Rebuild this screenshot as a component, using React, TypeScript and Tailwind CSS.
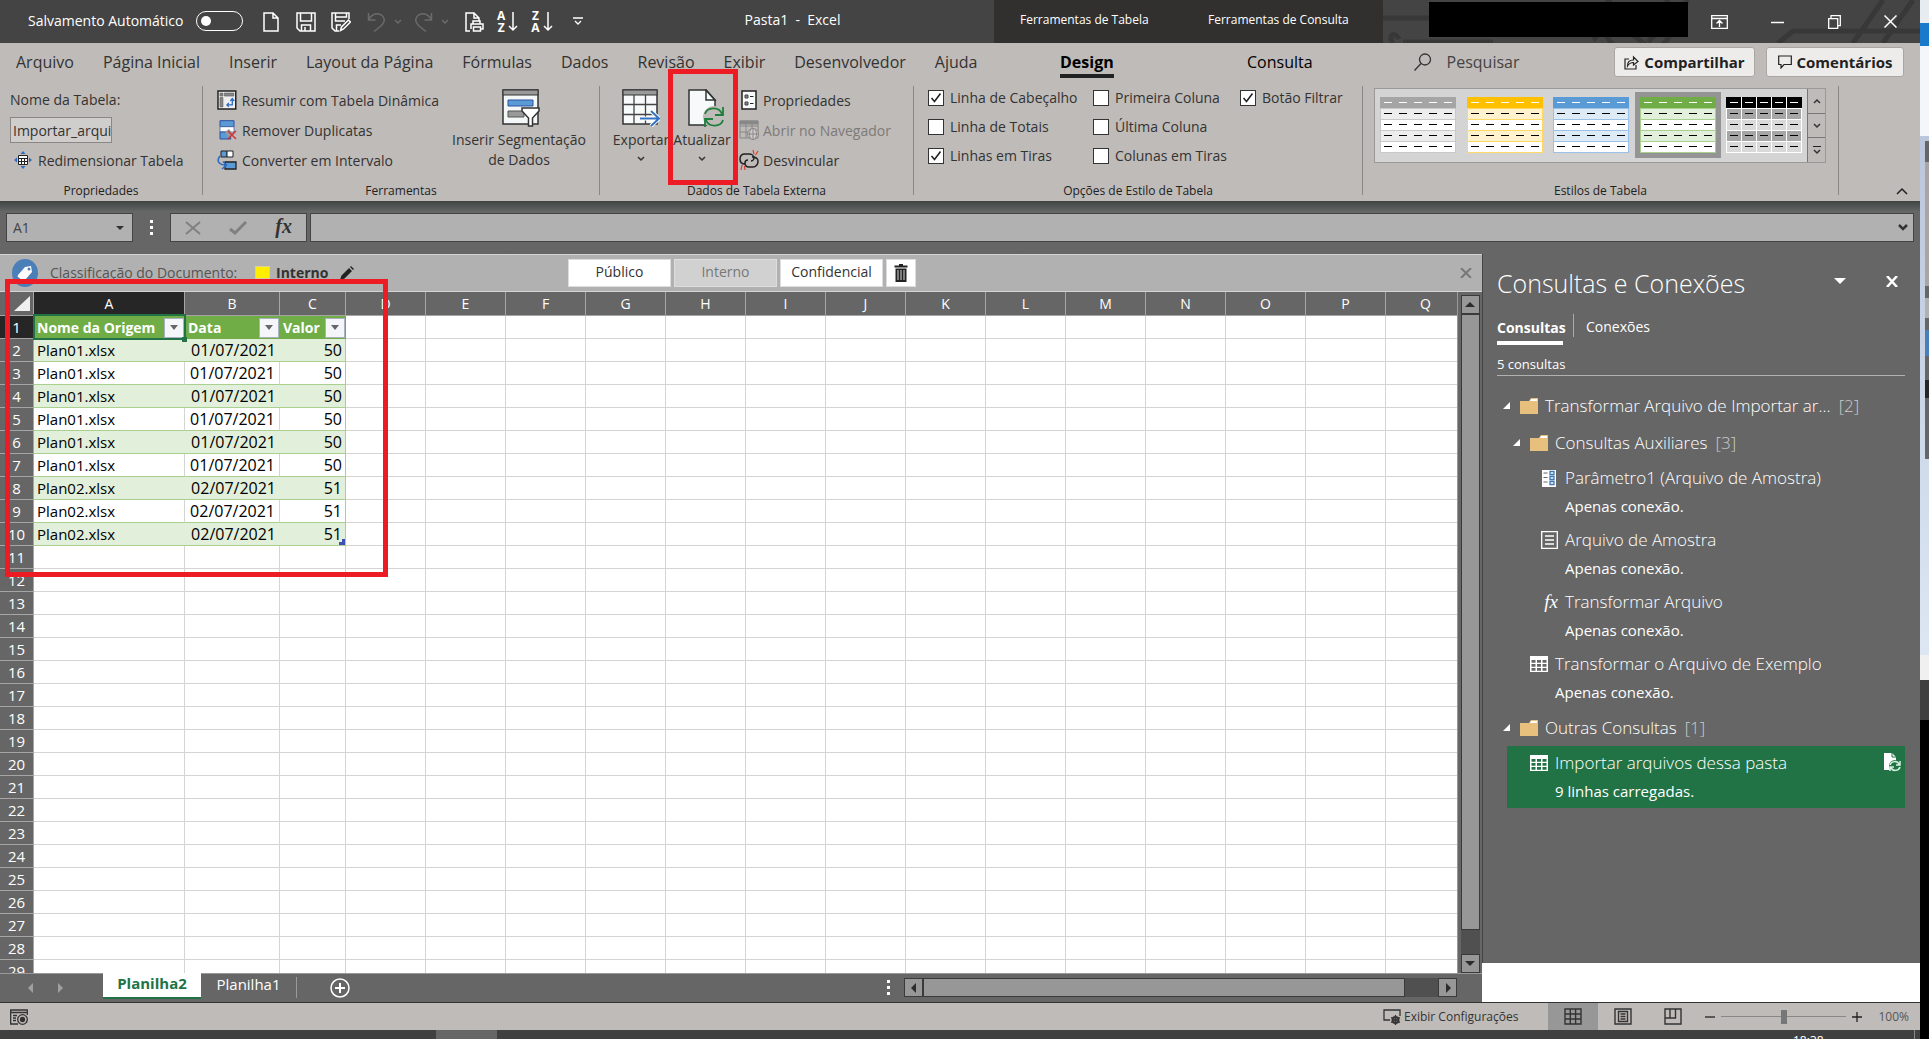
import React, { useState } from 'react';

const sans = "font-['Open_Sans','Noto_Sans',sans-serif]";

const tabs = [
  'Arquivo',
  'Página Inicial',
  'Inserir',
  'Layout da Página',
  'Fórmulas',
  'Dados',
  'Revisão',
  'Exibir',
  'Desenvolvedor',
  'Ajuda',
];

const tableRows = [
  ['Plan01.xlsx', '01/07/2021', '50'],
  ['Plan01.xlsx', '01/07/2021', '50'],
  ['Plan01.xlsx', '01/07/2021', '50'],
  ['Plan01.xlsx', '01/07/2021', '50'],
  ['Plan01.xlsx', '01/07/2021', '50'],
  ['Plan01.xlsx', '01/07/2021', '50'],
  ['Plan02.xlsx', '02/07/2021', '51'],
  ['Plan02.xlsx', '02/07/2021', '51'],
  ['Plan02.xlsx', '02/07/2021', '51'],
];

const letters = 'ABCDEFGHIJKLMNOPQ'.split('');
const emptyLetters = letters.slice(3);

const galleryStyles = [
  { name: 'Cinza', head: '#a5a5a5', band: '#ededed', plain: '#ffffff', line: '#c9c9c9' },
  { name: 'Amarelo', head: '#ffc000', band: '#fff2cc', plain: '#ffffff', line: '#ffd966' },
  { name: 'Azul', head: '#5b9bd5', band: '#ddebf7', plain: '#ffffff', line: '#9bc2e6' },
  { name: 'Verde', head: '#70ad47', band: '#e2efda', plain: '#ffffff', line: '#a9d08e' },
  { name: 'Preto', head: '#000000', band: '#a6a6a6', plain: '#d9d9d9', line: '#ffffff' },
];

const Chevron = ({ className = '', up = false }: { className?: string; up?: boolean }) => (
  <svg viewBox="0 0 8 6" className={`h-[6px] w-2 shrink-0 ${className}`} fill="none" stroke="currentColor" strokeWidth="1.5">
    <path d={up ? 'M1 5l3-3 3 3' : 'M1 1l3 3 3-3'} />
  </svg>
);

const FolderIcon = () => (
  <svg viewBox="0 0 18 16" className="h-4 w-[18px] shrink-0">
    <path d="M0 3h9l2-3h7v16H0z" fill="#e8c07d" />
    <path d="M10 3l1-2h6v2z" fill="#fff" />
  </svg>
);

const GridIcon = ({ gap = '#666' }: { gap?: string }) => (
  <svg viewBox="0 0 18 16" className="h-4 w-[18px] shrink-0">
    <path d="M0 0h18v16H0z" fill="#fff" />
    <path
      d="M1.5 4h4v2.7h-4zM7 4h4v2.7H7zM12.500 4h4v2.7h-4zM1.500 8h4v2.7h-4zM7 8h4v2.7H7zM12.500 8h4v2.7h-4zM1.500 12h4v2.7h-4zM7 12h4v2.7H7zM12.500 12h4v2.7h-4z"
      fill={gap}
    />
  </svg>
);

const ParamIcon = () => (
  <svg viewBox="0 0 14 17" className="mr-0.5 h-[17px] w-[14px] shrink-0">
    <path d="M0 0h14v17H0z" fill="#fff" />
    <path d="M1.5 3h4M1.5 7.5h4M1.5 12h4" stroke="#666" />
    <path d="M8 1.5h4v3H8zM8 6.5h4v3H8zM8 11.5h4v3H8z" fill="none" stroke="#3f78b5" strokeWidth="1.3" />
  </svg>
);

const TextFileIcon = () => (
  <svg viewBox="0 0 17 18" className="h-[18px] w-[17px] shrink-0" fill="none" stroke="#fff" strokeWidth="1.3">
    <path d="M.7.7h15.600v16.600H.7zM4 5h9M4 9h9M4 13h9" />
  </svg>
);

const SortIcon = ({ first, second }: { first: string; second: string }) => (
  <>
    <span className="flex flex-col">
      <span>{first}</span>
      <span>{second}</span>
    </span>
    <svg viewBox="0 0 10 20" className="ml-[3px] h-5 w-[10px]" fill="none" stroke="currentColor" strokeWidth="1.5">
      <path d="M5 0v18M1 14l4 4 4-4" />
    </svg>
  </>
);

const QuickAccess = () => (
  <div className="flex items-center text-white">
    <button aria-label="Novo" className="ml-5">
      <svg viewBox="0 0 16 20" className="h-5 w-4" fill="none" stroke="currentColor" strokeWidth="1.5">
        <path d="M1 1h9l5 5v13H1zM10 1v5h5" />
      </svg>
    </button>
    <button aria-label="Salvar" className="ml-[17px]">
      <svg viewBox="0 0 20 20" className="h-5 w-5" fill="none" stroke="currentColor" strokeWidth="1.5">
        <path d="M1 1h18v18H4l-3-3zM4.500 1v8h11V1M5.500 19v-6h9v6M9 15v4" />
      </svg>
    </button>
    <button aria-label="Salvar como" className="ml-[15px]">
      <svg viewBox="0 0 20 20" className="h-5 w-5" fill="none" stroke="currentColor" strokeWidth="1.5">
        <path d="M18 7V1H1v15l3 3h4M4.500 1v8H14M5.500 19v-6H10M4.500 5h11V1" />
        <path d="M9.500 18.500l1-3.500 7-7 2 2-7 7z" />
      </svg>
    </button>
    <button aria-label="Desfazer" className="ml-4 flex items-center text-[#6b6b6b]">
      <svg viewBox="0 0 19 20" className="h-5 w-[19px]" fill="none" stroke="currentColor" strokeWidth="1.5">
        <path d="M1.500 1v7h7M1.500 8C5 1.500 11 0 15 3.500s2 8-1 10.500L7 19.500" />
      </svg>
      <Chevron className="ml-2" />
    </button>
    <button aria-label="Refazer" className="ml-3 flex items-center text-[#6b6b6b]">
      <svg viewBox="0 0 19 20" className="h-5 w-[19px]" fill="none" stroke="currentColor" strokeWidth="1.5">
        <path d="M17.500 1v7h-7M17.500 8C14 1.500 8 0 4 3.500s-2 8 1 10.500l7 5.500" />
      </svg>
      <Chevron className="ml-2" />
    </button>
    <button aria-label="Visualizar impressão" className="ml-4">
      <svg viewBox="0 0 19 20" className="h-5 w-[19px]" fill="none" stroke="currentColor" strokeWidth="1.5">
        <path d="M5 19H1V1h8l5 5v3M9 1v5h5M8 12V9h7v3M6 17v-5h12v5h-2M8.500 15h7v4h-7z" />
      </svg>
    </button>
    <button aria-label="Classificar de A a Z" className="ml-[13px] flex items-center text-[12px] leading-3 font-bold">
      <SortIcon first="A" second="Z" />
    </button>
    <button aria-label="Classificar de Z a A" className="ml-[13px] flex items-center text-[12px] leading-3 font-bold">
      <SortIcon first="Z" second="A" />
    </button>
    <button aria-label="Personalizar" className="ml-5">
      <svg viewBox="0 0 10 9" className="h-[9px] w-[10px]" fill="none" stroke="currentColor" strokeWidth="1.3">
        <path d="M0 1h10M2 4l3 3 3-3" />
      </svg>
    </button>
  </div>
);

const TitleBar = () => (
  <header className="flex h-[43px] shrink-0 bg-[#444444] text-white">
    <div className="flex min-w-0 flex-1 items-center pl-7">
      <label htmlFor="autosave" className="w-[160px] pb-0.5 text-[14px] whitespace-nowrap">
        Salvamento Automático
      </label>
      <input
        id="autosave"
        type="checkbox"
        role="switch"
        className="mb-0.5 ml-2 h-5 w-[47px] shrink-0 appearance-none rounded-full border-[1.5px] border-white before:mt-1 before:ml-1 before:block before:h-[10px] before:w-[10px] before:rounded-full before:bg-white"
      />
      <QuickAccess />
      <h1 className="ml-[162px] pb-1 text-[14px] whitespace-pre">Pasta1  -  Excel</h1>
    </div>
    <div className="flex w-[389px] shrink-0 items-center bg-[#32302e] pb-1 text-[12px]">
      <span className="w-[182px] pl-[26px]">Ferramentas de Tabela</span>
      <span className="pl-8">Ferramentas de Consulta</span>
    </div>
    <div className="relative flex w-[537px] shrink-0 items-center overflow-hidden">
      <svg viewBox="0 0 537 43" className="absolute inset-0 h-full w-full" fill="none" stroke="#383838" strokeWidth="5">
        <path d="M0 18h50M10 43c-6-8 2-12 6-4M20 42h90M210 40l30-32M230 20l40 30M305 0l-40 42M395 43l15-12h130M470 43l30-43M500 43l30-43" />
        <circle cx="255" cy="20" r="35" />
      </svg>
      <div className="relative mb-1 ml-[46px] h-[35px] w-[259px] bg-black" />
      <div className="relative ml-[23px] flex flex-1 items-center justify-between pr-[23px]">
        <button aria-label="Opções da faixa de opções">
          <svg viewBox="0 0 17 14" className="h-[14px] w-[17px]" fill="none" stroke="#fff" strokeWidth="1.3">
            <path d="M.7.7h15.600v12.600H.7zM.7 3.500h15.600M8.500 12V6M5.500 8.500l3-3 3 3" />
          </svg>
        </button>
        <button aria-label="Minimizar">
          <svg viewBox="0 0 13 14" className="h-[14px] w-[13px]">
            <path d="M0 7.5h13" stroke="#fff" strokeWidth="1.5" />
          </svg>
        </button>
        <button aria-label="Restaurar">
          <svg viewBox="0 0 13 14" className="h-[14px] w-[13px]" fill="none" stroke="#fff" strokeWidth="1.3">
            <path d="M.7 3.700h9v9.600h-9zM3 3.500V.7h9.300v10H10" />
          </svg>
        </button>
        <button aria-label="Fechar">
          <svg viewBox="0 0 13 13" className="h-[13px] w-[13px]" stroke="#fff" strokeWidth="1.5">
            <path d="M.5.5l12 12M12.500.5l-12 12" />
          </svg>
        </button>
      </div>
    </div>
  </header>
);

const TabBar = () => (
  <nav className="flex h-[42px] items-center pb-1 text-[16px] text-[#333]">
    <div className="flex w-[1060px] items-center gap-[29px] pl-4">
      {tabs.map((t) => (
        <button key={t} className="whitespace-nowrap">
          {t}
        </button>
      ))}
    </div>
    <div className="w-[187px]">
      <button className="relative font-bold text-black">
        Design
        <span className="absolute -bottom-1 left-0 h-1 w-full bg-[#222]" />
      </button>
    </div>
    <button className="text-black">Consulta</button>
    <label className="ml-[101px] flex w-[180px] items-center">
      <svg viewBox="0 0 18 18" className="h-[18px] w-[18px] shrink-0" fill="none" stroke="#333" strokeWidth="1.3">
        <circle cx="11" cy="6.5" r="5.5" />
        <path d="M7 10.500L.5 17.500" />
      </svg>
      <input
        aria-label="Pesquisar"
        placeholder="Pesquisar"
        className="ml-[15px] w-full bg-transparent outline-none placeholder:text-[#444]"
      />
    </label>
    <div className="ml-auto flex gap-[11px] pr-4 text-[15px] font-bold text-[#222]">
      <button className="flex h-[30px] w-[141px] items-center justify-center gap-[5px] rounded-[3px] border border-[#a9a6a3] bg-[#eeecea]">
        <svg viewBox="0 0 15 15" className="h-[15px] w-[15px]" fill="none" stroke="#222" strokeWidth="1.2">
          <path d="M5 4H1v10h11v-4M3.500 11c0-4 2-6 6-6V2l4.500 4.500L9.500 10V7.500c-3 0-4.500 1-6 3.500z" />
        </svg>
        Compartilhar
      </button>
      <button className="flex h-[30px] w-[138px] items-center justify-center gap-[5px] rounded-[3px] border border-[#a9a6a3] bg-[#eeecea]">
        <svg viewBox="0 0 14 14" className="h-[14px] w-[14px]" fill="none" stroke="#222" strokeWidth="1.2">
          <path d="M.7 1h12.600v8.500H6L3 13V9.500H.7z" />
        </svg>
        Comentários
      </button>
    </div>
  </nav>
);

const RibbonCheck = ({ label, initial = false }: { label: string; initial?: boolean }) => {
  const [checked, setChecked] = useState(initial);
  return (
    <label className="flex h-[29px] items-start gap-1.5 leading-4 whitespace-nowrap">
      <span className="relative flex h-4 w-4 shrink-0">
        <input
          type="checkbox"
          checked={checked}
          onChange={(e) => setChecked(e.target.checked)}
          className="h-4 w-4 appearance-none border border-[#333] bg-white"
        />
        {checked && (
          <svg viewBox="0 0 16 16" className="pointer-events-none absolute inset-0" fill="none" stroke="#222" strokeWidth="1.6">
            <path d="M3.500 8l3 3.500 6-8" />
          </svg>
        )}
      </span>
      {label}
    </label>
  );
};

const RibbonGroup = ({ title, className, children }: { title: string; className: string; children: React.ReactNode }) => (
  <section className={`flex h-[109px] shrink-0 flex-col justify-between border-r border-[#8a8785] ${className}`}>
    {children}
    <h2 className="-mb-0.5 text-center text-[12px] leading-3 text-[#222]">{title}</h2>
  </section>
);

const StyleThumb = ({ head, band, plain, line }: { head: string; band: string; plain: string; line: string }) => (
  <svg viewBox="0 0 76 56" className="h-[56px] w-[76px]">
    {[head, band, plain, band, plain].map((fill, r) => (
      <g key={r}>
        <rect x="0.5" y={r * 11 + 0.5} width="75" height="11" fill={fill} stroke={r === 0 ? head : line} />
        {[0, 1, 2, 3, 4].map((c) => (
          <path key={c} d={`M${4 + c * 15} ${r * 11 + 5.5}h8`} stroke={r === 0 ? '#fff' : '#000'} />
        ))}
      </g>
    ))}
    {head === '#000000' && <path d="M15.500 0v56M30.500 0v56M45.500 0v56M60.500 0v56" stroke="#fff" />}
  </svg>
);

const Ribbon = () => (
  <div className="h-[158px] shrink-0 bg-[#bfbbb8] text-[#333]">
    <TabBar />
    <div className="flex pt-px text-[14px]">
      <RibbonGroup title="Propriedades" className="w-[203px]">
        <div className="flex flex-col pl-[10px]">
          <label htmlFor="table-name" className="h-[31px] leading-7">
            Nome da Tabela:
          </label>
          <input
            id="table-name"
            defaultValue="Importar_arqui"
            className="h-[26px] w-[102px] border border-[#8a8785] bg-[#d0cecc] pl-0.5 outline-none"
          />
          <button className="flex h-[34px] items-center gap-1.5 pl-1 whitespace-nowrap">
            <svg viewBox="0 0 18 18" className="h-[18px] w-[18px]">
              <path d="M9 0l2.500 3h-5zM9 18l2.500-3h-5zM0 9l3-2.500v5zM18 9l-3-2.500v5z" fill="#2b6cc4" />
              <path d="M4.500 4.500h9v9h-9zM4.500 7.500h9M4.500 10.500h9M7.500 7v7M10.500 7v7" fill="#fff" stroke="#222" />
            </svg>
            Redimensionar Tabela
          </button>
        </div>
      </RibbonGroup>

      <RibbonGroup title="Ferramentas" className="w-[397px]">
        <div className="-mt-px flex pl-[14px]">
          <div className="flex w-[222px] flex-col">
            <button className="flex h-[30px] items-center gap-[5px] whitespace-nowrap">
              <svg viewBox="0 0 20 20" className="h-5 w-5" fill="none">
                <path d="M1 1h18v18H1z" fill="#eee" stroke="#222" strokeWidth="1.5" />
                <path d="M3 3h3v3H3zM7.500 3H17v3H7.500zM3 7.500h3V17H3z" fill="#888" stroke="#555" strokeWidth=".6" />
                <path d="M10 15h5.500V9M13.500 11l2-2.500 2 2.500M12 13l-2 2 2 2" stroke="#2b6cc4" strokeWidth="1.3" />
              </svg>
              Resumir com Tabela Dinâmica
            </button>
            <button className="flex h-[30px] items-center gap-[5px] whitespace-nowrap">
              <svg viewBox="0 0 20 20" className="h-5 w-5" fill="none">
                <path d="M3 .7h14v6H3z" fill="#5b9bd5" stroke="#2a50a0" />
                <path d="M3 6.700h14V12H3z" fill="#fff" stroke="#2a50a0" strokeWidth=".7" />
                <path d="M3 12h8l3 7H3z" fill="#5b9bd5" stroke="#2a50a0" />
                <path d="M8 12l4-3 4 5-4 4z" fill="#999" />
                <path d="M11 11l8 8M19 11l-8 8" stroke="#d13438" strokeWidth="1.5" />
              </svg>
              Remover Duplicatas
            </button>
            <button className="flex h-[30px] items-center gap-[5px] whitespace-nowrap">
              <svg viewBox="0 0 20 20" className="h-5 w-5" fill="none">
                <path d="M4 1h6v6H4z" fill="#5b9bd5" stroke="#222" />
                <path d="M10 1h6v6h-6z" fill="#fff" stroke="#222" />
                <path d="M8 12h11v7H8z" fill="#5b9bd5" stroke="#222" strokeWidth="1.3" />
                <path d="M3 6C-1 11 2 15 9 15M6 11.500L9.500 15 5 19" stroke="#2b6cc4" strokeWidth="1.6" />
              </svg>
              Converter em Intervalo
            </button>
          </div>
          <button className="flex flex-1 flex-col items-center pt-1 leading-5">
            <svg viewBox="0 0 38 38" className="mb-[3px] ml-1 h-[38px] w-[38px]">
              <path d="M1 1h35v34H1z" fill="#f4f7f7" stroke="#333" strokeWidth="1.5" />
              <path d="M1 1h35v5H1z" fill="#999" stroke="#333" />
              <path d="M6 11h25v6H6z" fill="#5b9bd5" stroke="#2a50a0" />
              <path d="M6 22h16v6H6z" fill="#999" stroke="#555" />
              <path d="M20 19h17v3l-6.500 7v8h-4v-8L20 22z" fill="#fff" stroke="#333" strokeWidth="1.5" />
            </svg>
            Inserir Segmentação
            <br />
            de Dados
          </button>
        </div>
      </RibbonGroup>

      <RibbonGroup title="Dados de Tabela Externa" className="w-[314px]">
        <div className="-mt-px flex pl-[10px]">
          <button className="flex w-[62px] flex-col items-center pt-1 leading-5">
            <svg viewBox="0 0 38 38" className="mb-[3px] h-[38px] w-[38px]" fill="none">
              <path d="M1 1h34v34H1z" fill="#f7fafa" stroke="#333" strokeWidth="1.5" />
              <path d="M1 1h34v5H1z" fill="#999" stroke="#333" />
              <path d="M1 15.500h34M1 25.500h34M12 6v29M23.500 6v29" stroke="#444" strokeWidth="1.3" />
              <path d="M18 29.500h18M29 22l8 7.500-8 7.500" stroke="#fff" strokeWidth="4" />
              <path d="M18 29.500h18M29 22l8 7.500-8 7.500" stroke="#3373c4" strokeWidth="2" />
            </svg>
            Exportar
            <Chevron className="mt-1.5" />
          </button>
          <button className="relative flex w-[60px] flex-col items-center pt-1 leading-5">
            <svg viewBox="0 0 38 38" className="mb-[3px] ml-2 h-[38px] w-[38px]" fill="none">
              <path d="M2 1h17l9 10v25H2z" fill="#f7fafa" stroke="#333" strokeWidth="1.5" />
              <path d="M19 1v10h9z" stroke="#333" strokeWidth="1.5" />
              <circle cx="27" cy="28" r="11" fill="#bfbbb8" />
              <path d="M18 25c2-7 14-8 17 0M36 18v8h-8M36 31c-2 7-14 8-17 0M18 38v-8h8" stroke="#1f7f3c" strokeWidth="1.8" />
            </svg>
            Atualizar
            <Chevron className="mt-1.5" />
            <span className="pointer-events-none absolute -top-4 -left-1 h-[116px] w-[70px] border-[5px] border-[#ed1c24]" />
          </button>
          <div className="ml-[7px] flex flex-col">
            <button className="flex h-[30px] items-center gap-1 whitespace-nowrap">
              <svg viewBox="0 0 20 20" className="h-5 w-5" fill="none">
                <path d="M3 1h14v18H3z" fill="#f7fafa" stroke="#222" strokeWidth="1.5" />
                <path d="M6 5h3v3H6zM6 12h3v3H6z" fill="#888" stroke="#444" />
                <path d="M11 6.500h3.500M11 13.500h3.500" stroke="#222" />
              </svg>
              Propriedades
            </button>
            <button disabled className="flex h-[30px] items-center gap-1 whitespace-nowrap text-[#7d7a78]">
              <svg viewBox="0 0 20 20" className="h-5 w-5" fill="none" stroke="#888">
                <path d="M1 1h18v17H1zM1 6h18M1 12h18M7 4v14M13 4v14" />
                <path d="M1 1h18v3H1z" fill="#888" />
                <circle cx="14" cy="14" r="5.5" fill="#cfcccb" />
                <path d="M8.500 14h11M14 8.500v11M12 9c-2 3-2 7 0 10M16 9c2 3 2 7 0 10" />
              </svg>
              Abrir no Navegador
            </button>
            <button className="flex h-[30px] items-center gap-1 whitespace-nowrap">
              <svg viewBox="0 0 20 20" className="h-5 w-5" fill="none" stroke="#222" strokeWidth="1.5">
                <path d="M6 14c-3 0-5-2-5-5s2-5 5-5h4c3 0 5 2 5 4s-2 3-3 3M13 7c4 0 6 2 6 4.500S17 17 14 17h-4c-3 0-4-2-4-4s1-3 3-3" />
                <path d="M14 0l1 4M19 1l-2.500 4M2 20l1-5M6 20l-.5-4" stroke="#e03a2a" strokeWidth="1.2" />
              </svg>
              Desvincular
            </button>
          </div>
        </div>
      </RibbonGroup>

      <RibbonGroup title="Opções de Estilo de Tabela" className="w-[449px]">
        <div className="grid grid-cols-[165px_147px_auto] pt-1 pl-[14px]">
          <RibbonCheck label="Linha de Cabeçalho" initial />
          <RibbonCheck label="Primeira Coluna" />
          <RibbonCheck label="Botão Filtrar" initial />
          <RibbonCheck label="Linha de Totais" />
          <RibbonCheck label="Última Coluna" />
          <span />
          <RibbonCheck label="Linhas em Tiras" initial />
          <RibbonCheck label="Colunas em Tiras" />
        </div>
      </RibbonGroup>

      <RibbonGroup title="Estilos de Tabela" className="w-[476px]">
        <div className="mt-0.5 ml-[11px] flex h-[75px] w-[452px] border border-[#999] bg-[#d4d4d4]">
          <div className="flex flex-1 items-start justify-between pt-[3px]">
            {galleryStyles.map((s) => (
              <button
                key={s.name}
                aria-label={s.name}
                className={`flex h-[66px] w-[86px] items-center justify-center border-[5px] ${s.name === 'Verde' ? 'border-[#949494]' : 'border-transparent'}`}
              >
                <StyleThumb {...s} />
              </button>
            ))}
          </div>
          <div className="flex w-[18px] flex-col divide-y divide-[#777] border-l border-[#777] bg-[#bfbbb8]">
            <button aria-label="Acima" className="flex flex-1 items-center justify-center">
              <Chevron up />
            </button>
            <button aria-label="Abaixo" className="flex flex-1 items-center justify-center">
              <Chevron />
            </button>
            <button aria-label="Mais" className="flex flex-1 flex-col items-center justify-center">
              <span className="mb-0.5 h-px w-2 bg-[#222]" />
              <Chevron />
            </button>
          </div>
        </div>
      </RibbonGroup>
      <button aria-label="Recolher faixa de opções" className="mt-auto mr-3 ml-auto">
        <svg viewBox="0 0 12 8" className="h-2 w-3" fill="none" stroke="#222" strokeWidth="1.5">
          <path d="M1 7l5-5 5 5" />
        </svg>
      </button>
    </div>
  </div>
);

const Dots = () => (
  <span className="flex w-[3px] flex-col gap-[3px]">
    <span className="h-[3px] bg-white" />
    <span className="h-[3px] bg-white" />
    <span className="h-[3px] bg-white" />
  </span>
);

const FormulaBar = () => (
  <div className="flex h-[53px] shrink-0 items-start bg-linear-to-b from-[#3f4443] via-[#666] via-20% to-[#666] px-1.5 pt-3">
    <div className="flex h-[29px] w-[127px] items-center border border-[#444] bg-[#b1b1b1] pr-2 pl-1.5">
      <input aria-label="Caixa de nome" defaultValue="A1" className="w-full bg-transparent text-[14px] text-[#444] outline-none" />
      <svg viewBox="0 0 8 4" className="h-1 w-2 shrink-0">
        <path d="M0 0h8L4 4z" fill="#333" />
      </svg>
    </div>
    <div className="flex h-[29px] w-[37px] items-center justify-center">
      <Dots />
    </div>
    <div className="flex h-[29px] w-[137px] items-center justify-between border border-[#444] bg-[#b1b1b1] px-[14px]">
      <button aria-label="Cancelar">
        <svg viewBox="0 0 16 14" className="h-[14px] w-4" stroke="#808080" strokeWidth="2">
          <path d="M1 1l14 12M15 1L1 13" />
        </svg>
      </button>
      <button aria-label="Inserir">
        <svg viewBox="0 0 18 14" className="h-[14px] w-[18px]" fill="none" stroke="#808080" strokeWidth="3">
          <path d="M1 8l5 4L17 1" />
        </svg>
      </button>
      <button aria-label="Inserir função" className="pb-1 font-['Liberation_Serif',serif] text-[20px] leading-6 font-bold text-[#333] italic">
        fx
      </button>
    </div>
    <div className="ml-[3px] flex h-[29px] flex-1 items-center border border-[#444] bg-[#b1b1b1] pr-[5px]">
      <input aria-label="Barra de fórmulas" className="h-full flex-1 bg-transparent px-2 outline-none" />
      <svg viewBox="0 0 10 7" className="h-[7px] w-[10px]" fill="none" stroke="#333" strokeWidth="2.5">
        <path d="M1 1l4 4 4-4" />
      </svg>
    </div>
  </div>
);

const ClassificationBar = () => (
  <div className="flex h-[38px] shrink-0 items-center border-y border-[#d4d4d4] bg-[#b1b1b1] pb-px pl-3 text-[14px] text-[#555]">
    <svg viewBox="0 0 26 28" className="h-7 w-[26px] shrink-0">
      <ellipse cx="13" cy="14" rx="13" ry="14" fill="#4a7fb8" />
      <path d="M6 16l7-8 6-1 1 6-7 8q-1.500 1-3 0l-4-3q-1-1 0-2z" fill="#fff" />
      <circle cx="17" cy="10" r="1.5" fill="#4a7fb8" />
    </svg>
    <span className="ml-3 w-[205px] pb-px whitespace-nowrap">Classificação do Documento:</span>
    <span className="h-[13px] w-[15px] border border-[#d8d0a0] bg-[#ffee00]" />
    <strong className="ml-1.5 w-[64px] pb-px text-[#333]">Interno</strong>
    <button aria-label="Editar classificação">
      <svg viewBox="0 0 14 14" className="h-[14px] w-[14px]" fill="#222">
        <path d="M0 14l1.500-4.500L9 2l3 3-7.500 7.500zM10 1l1-1 3 3-1 1z" />
      </svg>
    </button>
    <div className="ml-[214px] flex items-center gap-[3px]">
      <button className="h-7 w-[103px] border border-[#ddd] bg-white pb-0.5 text-[#333]">Público</button>
      <button className="h-7 w-[103px] border border-[#ddd] bg-[#d1d1d1] pb-0.5 text-[#777]">Interno</button>
      <button className="h-7 w-[103px] border border-[#ddd] bg-white pb-0.5 text-[#333]">Confidencial</button>
      <button aria-label="Remover classificação" className="flex h-7 w-[30px] items-center justify-center border border-[#ddd] bg-white">
        <svg viewBox="0 0 14 18" className="h-[18px] w-[14px]">
          <path d="M5 0h4v1.500h4.500v2H.5v-2H5zM1.500 4.500h11V18h-11z" fill="#222" />
          <path d="M4 6v10M7 6v10M10 6v10" stroke="#bbb" strokeWidth="1.2" />
        </svg>
      </button>
    </div>
    <button aria-label="Fechar barra" className="mr-[10px] ml-auto">
      <svg viewBox="0 0 12 10" className="h-[10px] w-3" stroke="#777" strokeWidth="2">
        <path d="M1 0l10 10M11 0L1 10" />
      </svg>
    </button>
  </div>
);

const FilterButton = ({ label }: { label: string }) => (
  <button aria-label={label} className="mr-px flex h-5 w-5 shrink-0 items-center justify-center border border-[#a9b0bf] bg-[#f4f6fa]">
    <svg viewBox="0 0 8 5" className="h-[5px] w-2">
      <path d="M0 0h8L4 5z" fill="#666" />
    </svg>
  </button>
);

const colHead = 'h-[24px] border-r border-b border-[#a5a5a5] font-normal';
const rowHead = 'border-r border-b border-[#a5a5a5] px-0 py-0 text-center text-[15px] font-normal';
const emptyCell = 'border-r border-b border-[#d4d4d4]';

const Sheet = () => (
  <div className="min-h-0 flex-1 overflow-hidden bg-white">
    <table className="w-[1466px] table-fixed border-separate border-spacing-0 text-[16px] leading-[22px] text-black">
      <colgroup>
        <col className="w-[34px]" />
        <col className="w-[151px]" />
        <col className="w-[95px]" />
        <col className="w-[66px]" />
        {emptyLetters.map((l) => (
          <col key={l} className="w-[80px]" />
        ))}
      </colgroup>
      <thead className="bg-[#666] text-[14px] text-white">
        <tr>
          <th className={colHead}>
            <svg viewBox="0 0 16 15" className="mr-[3px] ml-auto h-[15px] w-4">
              <path d="M16 0v15H0z" fill="#f0f0f0" />
            </svg>
          </th>
          {letters.map((l) => (
            <th key={l} scope="col" className={`${colHead} ${l === 'A' ? 'bg-[#262626]' : ''}`}>
              {l}
            </th>
          ))}
        </tr>
      </thead>
      <tbody>
        <tr className="h-[23px]">
          <th scope="row" className={`${rowHead} bg-[#262626] text-white`}>1</th>
          <td className="relative bg-[#70ad47] p-0 font-bold text-white">
            <div className="flex h-[23px] items-center justify-between pl-[3px] text-[14px] whitespace-nowrap">
              Nome da Origem
              <FilterButton label="Filtrar Nome da Origem" />
            </div>
            <span className="pointer-events-none absolute -top-[2px] -left-[1px] h-[26px] w-[153px] border-2 border-[#217346]" />
            <span className="absolute -right-[2px] -bottom-[3px] h-[5px] w-[5px] bg-[#217346]" />
          </td>
          <td className="bg-[#70ad47] p-0 font-bold text-white">
            <div className="flex h-[23px] items-center justify-between pl-[3px] text-[14px]">
              Data
              <FilterButton label="Filtrar Data" />
            </div>
          </td>
          <td className="bg-[#70ad47] p-0 font-bold text-white">
            <div className="flex h-[23px] items-center justify-between pl-[3px] text-[14px]">
              Valor
              <FilterButton label="Filtrar Valor" />
            </div>
          </td>
          {emptyLetters.map((l) => (
            <td key={l} className={emptyCell} />
          ))}
        </tr>
        {tableRows.map((row, i) => (
          <tr key={i} className="h-[23px]">
            <th scope="row" className={`${rowHead} bg-[#666] text-white`}>{i + 2}</th>
            <td className={`border-b border-[#a9d08e] py-0 pr-0 pl-[3px] text-[15px] ${i % 2 === 0 ? 'bg-[#e2efda]' : 'border-r border-r-[#d4d4d4]'}`}>
              {row[0]}
            </td>
            <td className={`border-b border-[#a9d08e] py-0 pr-1 pl-0 text-right ${i % 2 === 0 ? 'bg-[#e2efda]' : 'border-r border-r-[#d4d4d4]'}`}>
              {row[1]}
            </td>
            <td className={`relative border-r border-b border-[#a9d08e] py-0 pr-[3px] pl-0 text-right ${i % 2 === 0 ? 'bg-[#e2efda]' : ''}`}>
              {row[2]}
              {i === tableRows.length - 1 && (
                <svg viewBox="0 0 6 6" className="absolute right-0 bottom-0 h-1.5 w-1.5">
                  <path d="M3 0h3v6H0V3h3z" fill="#3f51b5" />
                </svg>
              )}
            </td>
            {emptyLetters.map((l) => (
              <td key={l} className={emptyCell} />
            ))}
          </tr>
        ))}
        {Array.from({ length: 19 }, (_, i) => i + 11).map((n) => (
          <tr key={n} className="h-[23px]">
            <th scope="row" className={`${rowHead} bg-[#666] text-white`}>{n}</th>
            {letters.map((l) => (
              <td key={l} className={emptyCell} />
            ))}
          </tr>
        ))}
      </tbody>
    </table>
  </div>
);

const arrows = {
  up: 'M0 5l5-5 5 5z',
  down: 'M0 0h10L5 5z',
  left: 'M6 0v10L1 5z',
  right: 'M2 0v10l5-5z',
};

const ScrollButton = ({ dir, label }: { dir: keyof typeof arrows; label: string }) => (
  <button aria-label={label} className="flex h-[19px] w-[19px] shrink-0 items-center justify-center border border-[#3a3a3a] bg-[#979797]">
    <svg viewBox={dir === 'up' || dir === 'down' ? '0 0 10 5' : '0 0 8 10'} className={dir === 'up' || dir === 'down' ? 'h-[5px] w-[10px]' : 'h-[10px] w-2'}>
      <path d={arrows[dir]} fill="#2c2c2c" />
    </svg>
  </button>
);

const SheetTabs = () => (
  <div className="flex h-[29px] shrink-0 items-start border-t border-[#999] pr-[25px]">
    <div className="flex w-[103px] gap-[22px] pt-[9px] pl-[27px]">
      <button aria-label="Planilha anterior">
        <svg viewBox="0 0 8 10" className="h-[10px] w-2">
          <path d="M6 0v10L1 5z" fill="#a0a0a0" />
        </svg>
      </button>
      <button aria-label="Próxima planilha">
        <svg viewBox="0 0 8 10" className="h-[10px] w-2">
          <path d="M1 0v10l5-5z" fill="#a0a0a0" />
        </svg>
      </button>
    </div>
    <button className="-mt-px h-[26px] w-[98px] border-b-2 border-[#217346] bg-white pb-1 text-[15px] leading-5 font-bold text-[#217346]">
      Planilha2
    </button>
    <button className="mt-[3px] h-[21px] w-[96px] border-r border-[#999] pb-[7px] text-[15px] leading-[14px] text-white">Planilha1</button>
    <button aria-label="Nova planilha" className="mt-1 ml-[33px]">
      <svg viewBox="0 0 20 20" className="h-5 w-5" fill="none" stroke="#fff" strokeWidth="1.5">
        <circle cx="10" cy="10" r="9" />
        <path d="M10 5v10M5 10h10" strokeWidth="2" />
      </svg>
    </button>
    <div className="mt-1 ml-auto flex h-[19px] w-[570px] items-center">
      <Dots />
      <div className="ml-[14px] flex flex-1 bg-[#505050]">
        <ScrollButton dir="left" label="Rolar para a esquerda" />
        <div className="mr-[33px] h-[19px] flex-1 border border-[#3a3a3a] bg-[#979797]" />
        <ScrollButton dir="right" label="Rolar para a direita" />
      </div>
    </div>
  </div>
);

const FolderRow = ({ title, count, nested = false }: { title: string; count: number; nested?: boolean }) => (
  <button className={`flex h-[37px] w-full items-center text-[17px] font-light whitespace-nowrap ${nested ? 'pl-4' : 'pl-1.5'}`}>
    <svg viewBox="0 0 7 7" className="mr-[10px] h-[7px] w-[7px]">
      <path d="M7 0v7H0z" fill="#fff" />
    </svg>
    <FolderIcon />
    <span className="ml-[7px]">{title}</span>
    <span className="ml-2 text-[#ccc]">[{count}]</span>
  </button>
);

type QueryRowProps = { icon: React.ReactNode; title: string; sub: string; nested?: boolean; selected?: boolean };

const QueryRow = ({ icon, title, sub, nested, selected }: QueryRowProps) => (
  <div
    className={`ml-[10px] flex h-[62px] items-start gap-[7px] pt-[5px] ${nested ? 'pl-[33px]' : 'pl-[23px]'} ${selected ? 'bg-[#217346]' : ''}`}
  >
    <span className="flex h-6 w-[18px] items-center justify-end">{icon}</span>
    <div>
      <div className="text-[17px] leading-6 font-light whitespace-nowrap">{title}</div>
      <div className="mt-1 text-[15px] leading-6">{sub}</div>
    </div>
    {selected && (
      <svg viewBox="0 0 18 20" className="mt-px mr-1 ml-auto h-5 w-[18px] self-start" fill="none">
        <path d="M1 1h8l4 4v13H1z" fill="#fff" />
        <path d="M9 1v4h4" stroke="#217346" />
        <circle cx="12" cy="14" r="6" fill="#217346" />
        <path d="M7 13c1-4 8-5 9 0M17 9v4h-4M17 15c-1 4-8 5-9 0M7 19v-4h4" stroke="#d5f0df" strokeWidth="1.5" />
      </svg>
    )}
  </div>
);

const QueriesPane = () => (
  <aside className="flex w-[438px] shrink-0 flex-col bg-[#666] text-white">
    <div className="flex flex-1 flex-col border-l border-[#444] pr-[15px] pl-[14px]">
      <div className="flex h-[60px] items-center">
        <h2 className="text-[25px] font-light whitespace-nowrap">Consultas e Conexões</h2>
        <button aria-label="Opções do painel" className="mr-[40px] mb-1.5 ml-auto">
          <svg viewBox="0 0 12 6" className="h-1.5 w-3">
            <path d="M0 0h12L6 6z" fill="#fff" />
          </svg>
        </button>
        <button aria-label="Fechar painel" className="mr-[7px] mb-1.5">
          <svg viewBox="0 0 12 11" className="h-[11px] w-3" stroke="#fff" strokeWidth="2.5">
            <path d="M1 0l10 11M11 0L1 11" />
          </svg>
        </button>
      </div>
      <div className="flex text-[14px]">
        <button className="h-[31px] w-[66px] border-b-4 border-white text-left leading-[26px] font-bold whitespace-nowrap">Consultas</button>
        <button className="ml-[10px] h-[23px] border-l border-[#aaa] pt-0.5 pl-3">Conexões</button>
      </div>
      <p className="h-[31px] border-b border-[#b1b1b1] text-[13px] leading-[38px]">5 consultas</p>
      <div className="pt-[11px]">
        <FolderRow title="Transformar Arquivo de Importar ar..." count={2} />
        <FolderRow title="Consultas Auxiliares" count={3} nested />
        <QueryRow nested icon={<ParamIcon />} title="Parâmetro1 (Arquivo de Amostra)" sub="Apenas conexão." />
        <QueryRow nested icon={<TextFileIcon />} title="Arquivo de Amostra" sub="Apenas conexão." />
        <QueryRow
          nested
          icon={<span className="font-['Liberation_Serif',serif] text-[19px] italic">fx</span>}
          title="Transformar Arquivo"
          sub="Apenas conexão."
        />
        <QueryRow icon={<GridIcon />} title="Transformar o Arquivo de Exemplo" sub="Apenas conexão." />
        <FolderRow title="Outras Consultas" count={1} />
        <QueryRow selected icon={<GridIcon gap="#217346" />} title="Importar arquivos dessa pasta" sub="9 linhas carregadas." />
      </div>
    </div>
    <div className="h-[39px] bg-white" />
  </aside>
);

const StatusBar = () => (
  <footer className="flex h-[28px] shrink-0 items-center border-t border-[#333] bg-[#bfbbb8] text-[12px] text-[#333]">
    <button aria-label="Gravar macro" className="ml-[10px]">
      <svg viewBox="0 0 18 16" className="h-4 w-[18px]" fill="none" stroke="#333" strokeWidth="1.3">
        <path d="M8 15H.7V1h16.600v5M.7 3.500h16.600M3 6.500h4M3 9h3M3 11.500h3" />
        <circle cx="12.5" cy="10.5" r="4.8" />
        <circle cx="12.5" cy="10.5" r="2" fill="#333" />
      </svg>
    </button>
    <button className="ml-auto flex w-[165px] items-center gap-[3px] whitespace-nowrap">
      <svg viewBox="0 0 18 16" className="h-4 w-[18px]" fill="none" stroke="#333" strokeWidth="1.3">
        <path d="M7 11H1V1h16v6" />
        <circle cx="12.5" cy="11" r="3" strokeWidth="2" />
        <path d="M12.500 6v10M8 8.500l9 5M17 8.500l-9 5" />
      </svg>
      Exibir Configurações
    </button>
    <button aria-label="Normal" className="flex h-full w-[50px] items-center justify-center bg-[#979797]">
      <svg viewBox="0 0 18 17" className="h-[17px] w-[18px]" fill="none" stroke="#333" strokeWidth="1.4">
        <path d="M1 1h16v15H1zM1 6h16M1 11h16M6.300 1v15M11.600 1v15" />
      </svg>
    </button>
    <button aria-label="Layout da página" className="flex w-[50px] justify-center">
      <svg viewBox="0 0 18 17" className="h-[17px] w-[18px]" fill="none" stroke="#333" strokeWidth="1.4">
        <path d="M1 1h16v15H1zM4.500 3.500h9v10h-9zM6.500 6h5M6.500 8.500h5M6.500 11h5" />
      </svg>
    </button>
    <button aria-label="Quebra de página" className="flex w-[50px] justify-center">
      <svg viewBox="0 0 18 17" className="h-[17px] w-[18px]" fill="none" stroke="#333" strokeWidth="1.4">
        <path d="M1 1h16v15H1zM6 1v9M11.500 1v9H1" />
      </svg>
    </button>
    <button aria-label="Menos zoom" className="ml-[7px]">
      <svg viewBox="0 0 10 10" className="h-[10px] w-[10px]" stroke="#222" strokeWidth="1.3">
        <path d="M0 5h10" />
      </svg>
    </button>
    <input
      type="range"
      aria-label="Zoom"
      defaultValue={50}
      className="mx-1.5 h-4 w-[125px] appearance-none bg-[linear-gradient(#888,#888)] bg-[length:100%_1px] bg-center bg-no-repeat [&::-webkit-slider-thumb]:h-[14px] [&::-webkit-slider-thumb]:w-1.5 [&::-webkit-slider-thumb]:appearance-none [&::-webkit-slider-thumb]:bg-[#777]"
    />
    <button aria-label="Mais zoom">
      <svg viewBox="0 0 10 10" className="h-[10px] w-[10px]" stroke="#222" strokeWidth="1.3">
        <path d="M0 5h10M5 0v10" />
      </svg>
    </button>
    <span className="w-[58px] pr-[11px] text-right text-[#555]">100%</span>
  </footer>
);

// sliver of the windows behind, visible on the right side
const DesktopEdge = () => (
  <div className="flex w-[9px] shrink-0 flex-col bg-black">
    <div className="h-[23px] bg-[#e6ecef]" />
    <div className="h-[23px] bg-[#1979ca]" />
    <div className="h-[90px] bg-[#f4f6f9]" />
    <div className="h-[519px] bg-linear-to-b from-[#b9c6dc] to-[#dde7f3] pt-[5px] pl-[5px]">
      <div className="flex h-[318px] flex-col bg-[#666]">
        <div className="mt-[21px] h-[124px] bg-[#a9a5a2]" />
        <div className="mt-[12px] h-[20px] bg-[#b1b1b1]" />
        <div className="mt-[12px] h-[26px] bg-[#4a7fb8]" />
        <div className="mt-[24px] h-[18px] bg-[#262626]" />
      </div>
    </div>
    <div className="h-[25px] bg-[#f0f0f0]" />
    <div className="h-[40px] bg-[#404040]" />
  </div>
);

const App = () => {
  return (
    <div className={`flex h-screen w-full overflow-hidden ${sans}`}>
      <div className="flex min-w-0 flex-1 flex-col bg-[#666]">
        <TitleBar />
        <Ribbon />
        <FormulaBar />
        <main className="flex min-h-0 flex-1">
          <div className="relative flex min-w-0 flex-1 flex-col">
            <ClassificationBar />
            <div className="flex min-h-0 flex-1">
              <Sheet />
              <div className="flex w-[25px] shrink-0 flex-col items-center border-l border-[#999] pt-[3px]">
                <div className="flex flex-1 flex-col bg-[#505050]">
                  <ScrollButton dir="up" label="Rolar para cima" />
                  <div className="mb-6 w-[19px] flex-1 border border-[#3a3a3a] bg-[#979797]" />
                  <ScrollButton dir="down" label="Rolar para baixo" />
                </div>
              </div>
            </div>
            <SheetTabs />
            <span className="pointer-events-none absolute top-[25px] left-[5px] h-[298px] w-[383px] border-[5px] border-[#ed1c24]" />
          </div>
          <QueriesPane />
        </main>
        <StatusBar />
        <div className="flex h-[9px] shrink-0 overflow-hidden bg-[#404040]">
          <div className="ml-[436px] w-[61px] bg-[#666]" />
          <div className="mr-[5px] ml-auto flex w-[122px] border-r border-[#888] text-[12px] leading-3 text-white">
            <time className="pt-[5px]">18:38</time>
          </div>
        </div>
      </div>
      <DesktopEdge />
    </div>
  );
};

export default App;
